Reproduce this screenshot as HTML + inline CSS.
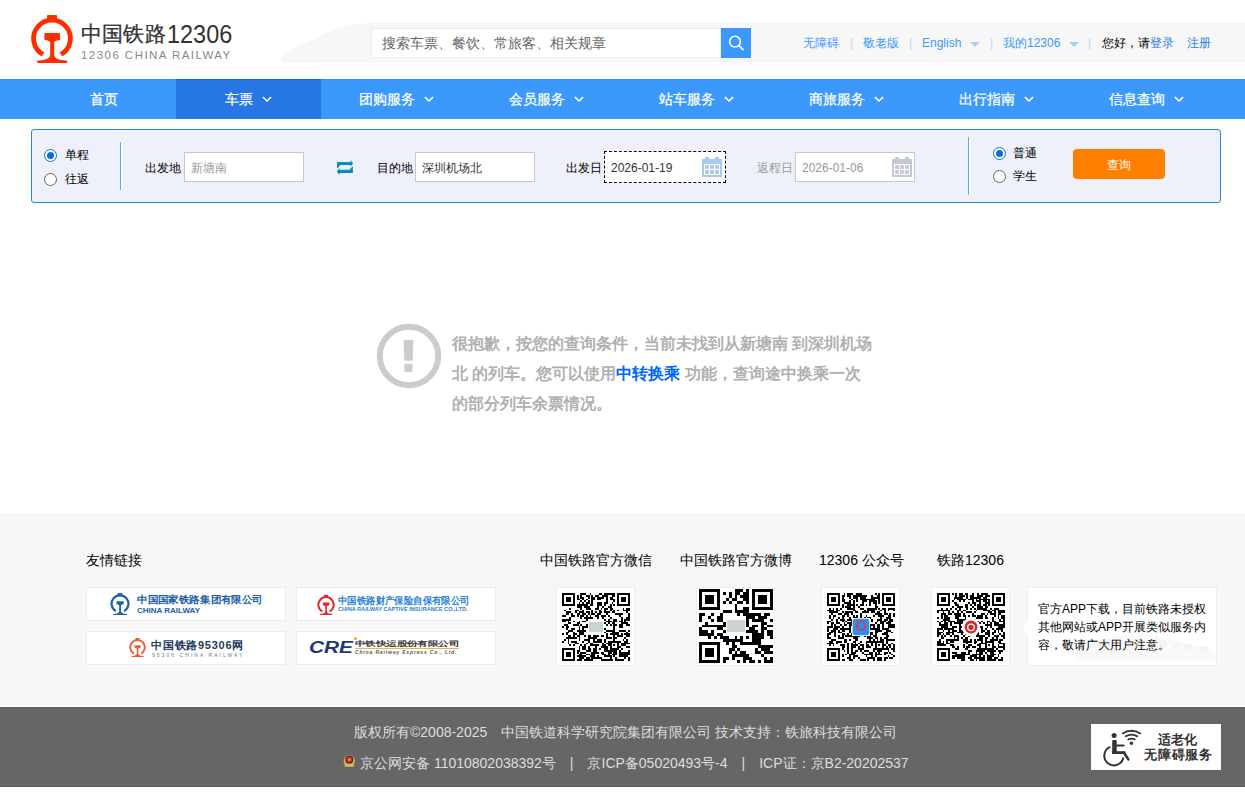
<!DOCTYPE html>
<html><head><meta charset="utf-8"><title>12306</title>
<style>
*{margin:0;padding:0;box-sizing:border-box}
html,body{width:1245px;height:812px;overflow:hidden;background:#fff}
body{position:relative;font-family:"Liberation Sans",sans-serif;color:#333;font-size:12px}
.a{position:absolute;white-space:nowrap}
.nav{position:absolute;left:0;top:79px;width:1245px;height:40px;background:#3b99fc;border-top:1px solid #3090fa}
.ni{position:absolute;top:0;height:39px;line-height:38px;color:#fff;font-size:14px;text-align:center;-webkit-text-stroke:0.25px #fff}
.ni .ar{display:inline-block;width:10px;height:6px;margin-left:9px;position:relative;top:-2.5px}
.panel{position:absolute;left:31px;top:129px;width:1190px;height:74px;border:1px solid #2b89d3;border-radius:3px;background:#eef1f9}
.radio{position:absolute;width:13px;height:13px;border-radius:50%;border:1px solid #666;background:#fff}
.radio.on{border:1.5px solid #0a70d8}
.radio.on:after{content:"";position:absolute;left:1.5px;top:1.5px;width:7px;height:7px;border-radius:50%;background:#0a70d8}
.inp{position:absolute;height:30px;background:#fff;border:1px solid #c8c8c8;font-size:12px;line-height:30px;padding-left:6px}
.lbl{position:absolute;font-size:12px;line-height:16px;color:#000;white-space:nowrap}
.qrbox{position:absolute;top:587px;width:79px;height:79px;background:#fff;border:1px solid #eee}
.lk{position:absolute;top:587px;width:200px;height:34px;background:#fff;border:1px solid #ececec}
.ft{position:absolute;font-size:14px;color:#000;line-height:16px;white-space:nowrap}
.top{position:absolute;top:35px;font-size:12px;line-height:16px;color:#3b99fc;white-space:nowrap}
.sep{color:#b9d5f7}
</style></head><body>
<svg width="0" height="0" style="position:absolute"><defs><symbol id="rl" viewBox="31 15 42 48"><rect x="47" y="15" width="10" height="5" rx="1"/><path d="M43 54.5A18.4 18.4 0 1 1 61 54.5" fill="none" stroke="currentColor" stroke-width="4.8"/><path d="M45.5 33h13c1 0 1.5 .6 1.5 1.5v5.2c-2 .4-4 1-5.8 2V55c0 2 2 3.5 5 4.5c3 .8 5.5 1 8 1.2V63H37.2v-2.3c2.5-.2 5-.4 8-1.2c3-1 5-2.5 5-4.5V41.7c-1.8-1-3.8-1.6-5.8-2v-5.2c0-.9.5-1.5 1.1-1.5z"/></symbol>
<symbol id="cal" viewBox="0 0 20 20"><rect x="0" y="2" width="20" height="18"/><rect x="3" y="0" width="4" height="2.5"/><rect x="13" y="0" width="4" height="2.5"/><rect x="2" y="7" width="16" height="11" fill="#fff"/><rect x="3.1" y="8.1" width="3.8" height="3.8"/><rect x="8.1" y="8.1" width="3.8" height="3.8"/><rect x="13.1" y="8.1" width="3.8" height="3.8"/><rect x="3.1" y="13.1" width="3.8" height="3.8"/><rect x="8.1" y="13.1" width="3.8" height="3.8"/><rect x="13.1" y="13.1" width="3.8" height="3.8"/></symbol></defs></svg>

<!-- header -->
<svg class="a" style="left:0;top:0" width="1245" height="79" viewBox="0 0 1245 79">
 <path d="M284 62.8H1245V22.8H380C360 23 345 25 330 31.5L298 46C288 50.5 281 55 281 59C281 61.5 282 62.8 284 62.8Z" fill="#f7f7f7"/>
 <svg x="31" y="15" width="42" height="48" style="color:#ff2c00;fill:#ff2c00"><use href="#rl"/></svg>
</svg>
<div class="a" style="left:80.5px;top:19.5px;font-size:21px;line-height:28px;color:#333;-webkit-text-stroke:0.3px #333;letter-spacing:0.4px">中国铁路</div>
<div class="a" style="left:166.5px;top:18.5px;font-size:25.5px;line-height:30px;color:#333;transform-origin:0 0;transform:scaleX(0.92)">12306</div>
<div class="a" style="left:81px;top:48px;font-size:11.5px;line-height:14px;color:#888;letter-spacing:1.45px">12306 CHINA RAILWAY</div>

<div class="a" style="left:371px;top:28px;width:350px;height:30px;background:#fff;border:1px solid #ececec"></div>
<div class="a" style="left:382px;top:34px;font-size:14px;line-height:18px;color:#666">搜索车票、餐饮、常旅客、相关规章</div>
<div class="a" style="left:721px;top:28px;width:30px;height:30px;background:#3b99fc"></div>
<svg class="a" style="left:721px;top:28px" width="30" height="30" viewBox="0 0 30 30"><circle cx="14" cy="13.7" r="5.4" fill="none" stroke="#fff" stroke-width="1.5"/><path d="M17.9 17.6L22 21.6" stroke="#fff" stroke-width="1.6" stroke-linecap="round"/></svg>

<div class="top" style="left:803px">无障碍</div>
<div class="top sep" style="left:850px">|</div>
<div class="top" style="left:863px">敬老版</div>
<div class="top sep" style="left:909px">|</div>
<div class="top" style="left:922px">English</div>
<svg class="a" style="left:970px;top:42px" width="10" height="5"><path d="M0 0h10L5 5z" fill="#a9cdf7"/></svg>
<div class="top sep" style="left:990px">|</div>
<div class="top" style="left:1003px">我的12306</div>
<svg class="a" style="left:1069px;top:42px" width="10" height="5"><path d="M0 0h10L5 5z" fill="#a9cdf7"/></svg>
<div class="top sep" style="left:1088px">|</div>
<div class="top" style="left:1102px;color:#000">您好，请<span style="color:#2b7fe8">登录</span></div>
<div class="top" style="left:1187px;color:#2b7fe8">注册</div>

<!-- nav -->
<div class="nav">
 <div class="ni" style="left:31px;width:145px">首页</div>
 <div class="a" style="left:176px;top:-1px;width:145px;height:40px;background:#2676e3;border-top:1px solid #1b66d6"></div><div class="ni" style="left:176px;width:145px">车票<svg class="ar" width="10" height="6" viewBox="0 0 10 6"><path d="M1 1.2L5 5L9 1.2" fill="none" stroke="#fff" stroke-width="1.6"/></svg></div>
 <div class="ni" style="left:321px;width:150px">团购服务<svg class="ar" width="10" height="6" viewBox="0 0 10 6"><path d="M1 1.2L5 5L9 1.2" fill="none" stroke="#fff" stroke-width="1.6"/></svg></div>
 <div class="ni" style="left:471px;width:150px">会员服务<svg class="ar" width="10" height="6" viewBox="0 0 10 6"><path d="M1 1.2L5 5L9 1.2" fill="none" stroke="#fff" stroke-width="1.6"/></svg></div>
 <div class="ni" style="left:621px;width:150px">站车服务<svg class="ar" width="10" height="6" viewBox="0 0 10 6"><path d="M1 1.2L5 5L9 1.2" fill="none" stroke="#fff" stroke-width="1.6"/></svg></div>
 <div class="ni" style="left:771px;width:150px">商旅服务<svg class="ar" width="10" height="6" viewBox="0 0 10 6"><path d="M1 1.2L5 5L9 1.2" fill="none" stroke="#fff" stroke-width="1.6"/></svg></div>
 <div class="ni" style="left:921px;width:150px">出行指南<svg class="ar" width="10" height="6" viewBox="0 0 10 6"><path d="M1 1.2L5 5L9 1.2" fill="none" stroke="#fff" stroke-width="1.6"/></svg></div>
 <div class="ni" style="left:1071px;width:150px">信息查询<svg class="ar" width="10" height="6" viewBox="0 0 10 6"><path d="M1 1.2L5 5L9 1.2" fill="none" stroke="#fff" stroke-width="1.6"/></svg></div>
</div>

<!-- search panel -->
<div class="panel"></div>
<div class="radio on" style="left:44px;top:149px"></div>
<div class="lbl" style="left:65px;top:147px">单程</div>
<div class="radio" style="left:44px;top:173px"></div>
<div class="lbl" style="left:65px;top:171px">往返</div>
<div class="a" style="left:120px;top:142px;width:1px;height:48px;background:#5aaee0;box-shadow:1px 0 0 #fff"></div>
<div class="lbl" style="left:145px;top:160px">出发地</div>
<div class="inp" style="left:184px;top:152px;width:120px;color:#999">新塘南</div>
<svg class="a" style="left:330px;top:154px" width="30" height="26" viewBox="0 0 30 26"><defs><linearGradient id="sg" x1="0" y1="0" x2="0" y2="1"><stop offset="0" stop-color="#0aa2da"/><stop offset="1" stop-color="#0877aa"/></linearGradient></defs><g fill="url(#sg)"><path d="M7 8H20.5V5.9L23.1 9.45L20.5 12.6V10.9H9.8V11.6L7 14.7Z"/><path d="M22.9 18.9H9.6V21.1L6.9 17.45L9.6 14.1V15.7H20V15L22.9 12Z"/></g></svg>
<div class="lbl" style="left:377px;top:160px">目的地</div>
<div class="inp" style="left:415px;top:152px;width:120px;color:#333">深圳机场北</div>
<div class="lbl" style="left:566px;top:160px">出发日</div>
<div class="inp" style="left:604px;top:151px;width:122px;height:32px;border:1px dashed #000;color:#333;line-height:32px">2026-01-19</div>
<svg class="a" style="left:702px;top:157px;fill:#a8cdec" width="20" height="20"><use href="#cal"/></svg>
<div class="lbl" style="left:757px;top:160px;color:#999">返程日</div>
<div class="inp" style="left:795px;top:152px;width:120px;color:#999;line-height:31px">2026-01-06</div>
<svg class="a" style="left:892px;top:157px;fill:#c4c8d4" width="20" height="20"><use href="#cal"/></svg>
<div class="a" style="left:968px;top:137px;width:1px;height:58px;background:#5aaee0;box-shadow:1px 0 0 #fff"></div>
<div class="radio on" style="left:993px;top:147px"></div>
<div class="lbl" style="left:1013px;top:145px">普通</div>
<div class="radio" style="left:993px;top:170px"></div>
<div class="lbl" style="left:1013px;top:168px">学生</div>
<div class="a" style="left:1073px;top:149px;width:92px;height:30px;background:#ff8000;border-radius:4px;color:#fff;font-size:12px;line-height:33px;text-align:center">查询</div>

<!-- message -->
<svg class="a" style="left:370px;top:317px" width="80" height="80" viewBox="0 0 80 80"><circle cx="39" cy="39" r="29.2" fill="none" stroke="#ccc" stroke-width="6"/><path d="M33.5 23h10l-.8 20.8h-8.4z" fill="#ccc"/><rect x="34.3" y="47" width="8.2" height="8" fill="#ccc"/></svg>
<div class="a" style="left:452px;top:329px;font-size:16px;line-height:30px;color:#b0b0b0;font-weight:bold">很抱歉，按您的查询条件，当前未找到从新塘南 到深圳机场<br>北 的列车。您可以使用<span style="color:#0066ff">中转换乘</span> 功能，查询途中换乘一次<br>的部分列车余票情况。</div>

<!-- footer -->
<div class="a" style="left:0;top:513px;width:1245px;height:193px;background:#f7f7f7"></div>
<div class="ft" style="left:86px;top:552px">友情链接</div>
<div class="lk" style="left:86px"></div>
<div class="lk" style="left:296px"></div>
<div class="lk" style="left:86px;top:631px"></div>
<div class="lk" style="left:296px;top:631px"></div>
<svg class="a" style="left:110px;top:593px;color:#1f5fa6;fill:#1f5fa6" width="20" height="22"><use href="#rl"/></svg>
<div class="a" style="left:137px;top:594px;font-size:10px;line-height:12px;color:#2160a8;font-weight:bold;transform-origin:0 0;transform:scaleX(1.05)">中国国家铁路集团有限公司</div>
<div class="a" style="left:137px;top:606px;font-size:8px;line-height:10px;color:#2160a8;font-weight:bold">CHINA RAILWAY</div>
<svg class="a" style="left:317px;top:595px;color:#e3242b;fill:#e3242b" width="18" height="20"><use href="#rl"/></svg>
<div class="a" style="left:338px;top:595px;font-size:9.6px;line-height:11px;color:#2b7fd9;font-weight:bold;transform-origin:0 0;transform:scaleX(0.94)">中国铁路财产保险自保有限公司</div>
<div class="a" style="left:338px;top:606px;font-size:5.6px;line-height:6px;color:#2b7fd9;font-weight:bold;transform-origin:0 0;transform:scaleX(1.0)">CHINA RAILWAY CAPTIVE INSURANCE CO.,LTD.</div>
<svg class="a" style="left:129px;top:638px;color:#f05a3a;fill:#f05a3a" width="17" height="19"><use href="#rl"/></svg>
<div class="a" style="left:151px;top:639px;font-size:11px;line-height:12px;color:#23395d;font-weight:bold;letter-spacing:0.75px">中国铁路95306网</div>
<div class="a" style="left:152px;top:652px;font-size:5px;line-height:6px;color:#6a7a90;letter-spacing:2.05px">95306 CHINA RAILWAY</div>
<div class="a" style="left:309px;top:639.5px;font-size:16px;line-height:16px;color:#1d3a7a;font-weight:bold;font-style:italic;transform-origin:0 0;transform:scaleX(1.3)">CRE</div>
<div class="a" style="left:355px;top:640px;font-size:10.3px;line-height:12px;color:#333;font-weight:bold;transform-origin:0 0;transform:scale(1.04,0.68)">中铁快运股份有限公司</div>
<div class="a" style="left:355px;top:648px;width:104px;height:1px;background:#f0b040"></div><div class="a" style="left:354px;top:637px;width:3px;height:3px;border-radius:50%;background:#f5a020"></div>
<div class="a" style="left:355px;top:649px;font-size:5px;line-height:6px;color:#555;font-weight:bold;font-style:italic;letter-spacing:0.85px">China Railway Express Co., Ltd.</div>

<div class="ft" style="left:540px;top:552px">中国铁路官方微信</div>
<div class="ft" style="left:680px;top:552px">中国铁路官方微博</div>
<div class="ft" style="left:819px;top:552px">12306 公众号</div>
<div class="ft" style="left:937px;top:552px">铁路12306</div>
<div class="qrbox" style="left:556px"></div>
<div class="qrbox" style="left:696px"></div>
<div class="qrbox" style="left:821px"></div>
<div class="qrbox" style="left:931px"></div>
<svg class="a" style="left:562px;top:593px" width="68" height="68" viewBox="0 0 37 37" shape-rendering="crispEdges"><path d="M0 0h7v1h-7zM10 0h3v1h-3zM15 0h1v1h-1zM20 0h2v1h-2zM23 0h6v1h-6zM30 0h7v1h-7zM0 1h1v1h-1zM6 1h1v1h-1zM8 1h1v1h-1zM10 1h1v1h-1zM13 1h2v1h-2zM16 1h1v1h-1zM18 1h2v1h-2zM22 1h3v1h-3zM27 1h2v1h-2zM30 1h1v1h-1zM36 1h1v1h-1zM0 2h1v1h-1zM2 2h3v1h-3zM6 2h1v1h-1zM8 2h1v1h-1zM10 2h2v1h-2zM14 2h1v1h-1zM16 2h2v1h-2zM19 2h4v1h-4zM24 2h1v1h-1zM26 2h2v1h-2zM30 2h1v1h-1zM32 2h3v1h-3zM36 2h1v1h-1zM0 3h1v1h-1zM2 3h3v1h-3zM6 3h1v1h-1zM8 3h2v1h-2zM11 3h1v1h-1zM13 3h1v1h-1zM16 3h2v1h-2zM19 3h2v1h-2zM24 3h1v1h-1zM26 3h3v1h-3zM30 3h1v1h-1zM32 3h3v1h-3zM36 3h1v1h-1zM0 4h1v1h-1zM2 4h3v1h-3zM6 4h1v1h-1zM10 4h1v1h-1zM12 4h1v1h-1zM14 4h1v1h-1zM16 4h1v1h-1zM24 4h1v1h-1zM28 4h1v1h-1zM30 4h1v1h-1zM32 4h3v1h-3zM36 4h1v1h-1zM0 5h1v1h-1zM6 5h1v1h-1zM9 5h1v1h-1zM11 5h1v1h-1zM13 5h2v1h-2zM16 5h1v1h-1zM19 5h3v1h-3zM23 5h2v1h-2zM27 5h1v1h-1zM30 5h1v1h-1zM36 5h1v1h-1zM0 6h7v1h-7zM8 6h6v1h-6zM15 6h2v1h-2zM19 6h3v1h-3zM23 6h1v1h-1zM26 6h1v1h-1zM28 6h1v1h-1zM30 6h7v1h-7zM8 7h3v1h-3zM12 7h3v1h-3zM19 7h1v1h-1zM22 7h1v1h-1zM25 7h2v1h-2zM4 8h1v1h-1zM10 8h1v1h-1zM13 8h3v1h-3zM18 8h2v1h-2zM21 8h1v1h-1zM23 8h2v1h-2zM26 8h2v1h-2zM33 8h1v1h-1zM35 8h2v1h-2zM1 9h1v1h-1zM7 9h2v1h-2zM11 9h1v1h-1zM16 9h1v1h-1zM20 9h1v1h-1zM23 9h1v1h-1zM26 9h1v1h-1zM28 9h1v1h-1zM30 9h1v1h-1zM33 9h4v1h-4zM2 10h3v1h-3zM7 10h1v1h-1zM9 10h3v1h-3zM13 10h2v1h-2zM16 10h1v1h-1zM18 10h1v1h-1zM20 10h2v1h-2zM23 10h3v1h-3zM27 10h2v1h-2zM35 10h1v1h-1zM2 11h2v1h-2zM5 11h1v1h-1zM8 11h2v1h-2zM11 11h2v1h-2zM14 11h1v1h-1zM16 11h2v1h-2zM19 11h2v1h-2zM24 11h1v1h-1zM29 11h4v1h-4zM36 11h1v1h-1zM0 12h2v1h-2zM5 12h2v1h-2zM8 12h1v1h-1zM10 12h2v1h-2zM13 12h1v1h-1zM15 12h1v1h-1zM18 12h2v1h-2zM21 12h3v1h-3zM25 12h1v1h-1zM31 12h1v1h-1zM36 12h1v1h-1zM4 13h1v1h-1zM10 13h1v1h-1zM12 13h5v1h-5zM19 13h1v1h-1zM22 13h1v1h-1zM26 13h1v1h-1zM32 13h1v1h-1zM35 13h2v1h-2zM0 14h5v1h-5zM13 14h1v1h-1zM16 14h1v1h-1zM18 14h4v1h-4zM23 14h1v1h-1zM25 14h1v1h-1zM28 14h2v1h-2zM32 14h1v1h-1zM34 14h3v1h-3zM0 15h2v1h-2zM3 15h1v1h-1zM6 15h1v1h-1zM9 15h1v1h-1zM11 15h2v1h-2zM14 15h1v1h-1zM18 15h1v1h-1zM22 15h1v1h-1zM24 15h3v1h-3zM28 15h2v1h-2zM31 15h2v1h-2zM34 15h1v1h-1zM3 16h2v1h-2zM8 16h2v1h-2zM15 16h2v1h-2zM20 16h4v1h-4zM25 16h1v1h-1zM27 16h2v1h-2zM32 16h4v1h-4zM1 17h2v1h-2zM6 17h3v1h-3zM10 17h1v1h-1zM13 17h1v1h-1zM17 17h3v1h-3zM21 17h2v1h-2zM24 17h1v1h-1zM26 17h1v1h-1zM28 17h2v1h-2zM31 17h2v1h-2zM35 17h2v1h-2zM0 18h1v1h-1zM2 18h2v1h-2zM9 18h1v1h-1zM11 18h3v1h-3zM16 18h7v1h-7zM28 18h1v1h-1zM31 18h2v1h-2zM2 19h1v1h-1zM5 19h2v1h-2zM9 19h1v1h-1zM11 19h1v1h-1zM14 19h2v1h-2zM19 19h2v1h-2zM23 19h1v1h-1zM28 19h1v1h-1zM3 20h3v1h-3zM8 20h5v1h-5zM14 20h3v1h-3zM19 20h3v1h-3zM24 20h5v1h-5zM31 20h4v1h-4zM36 20h1v1h-1zM2 21h2v1h-2zM6 21h1v1h-1zM9 21h3v1h-3zM14 21h1v1h-1zM17 21h1v1h-1zM20 21h4v1h-4zM27 21h4v1h-4zM35 21h1v1h-1zM0 22h1v1h-1zM2 22h1v1h-1zM6 22h2v1h-2zM9 22h3v1h-3zM15 22h1v1h-1zM17 22h1v1h-1zM19 22h1v1h-1zM21 22h1v1h-1zM24 22h1v1h-1zM26 22h5v1h-5zM32 22h1v1h-1zM34 22h3v1h-3zM3 23h2v1h-2zM6 23h1v1h-1zM8 23h2v1h-2zM12 23h1v1h-1zM14 23h2v1h-2zM17 23h3v1h-3zM21 23h2v1h-2zM24 23h1v1h-1zM28 23h1v1h-1zM30 23h3v1h-3zM35 23h2v1h-2zM2 24h6v1h-6zM9 24h1v1h-1zM14 24h5v1h-5zM24 24h3v1h-3zM28 24h2v1h-2zM34 24h1v1h-1zM1 25h1v1h-1zM3 25h1v1h-1zM9 25h1v1h-1zM12 25h3v1h-3zM17 25h1v1h-1zM19 25h3v1h-3zM23 25h1v1h-1zM28 25h1v1h-1zM33 25h1v1h-1zM35 25h1v1h-1zM0 26h1v1h-1zM3 26h1v1h-1zM5 26h3v1h-3zM11 26h1v1h-1zM14 26h1v1h-1zM17 26h5v1h-5zM23 26h1v1h-1zM25 26h7v1h-7zM34 26h2v1h-2zM3 27h1v1h-1zM7 27h2v1h-2zM13 27h1v1h-1zM15 27h2v1h-2zM22 27h1v1h-1zM24 27h3v1h-3zM30 27h1v1h-1zM32 27h5v1h-5zM4 28h1v1h-1zM6 28h1v1h-1zM10 28h1v1h-1zM12 28h1v1h-1zM15 28h5v1h-5zM22 28h2v1h-2zM25 28h2v1h-2zM28 28h1v1h-1zM30 28h1v1h-1zM32 28h3v1h-3zM9 29h1v1h-1zM11 29h2v1h-2zM14 29h1v1h-1zM18 29h1v1h-1zM21 29h4v1h-4zM26 29h1v1h-1zM30 29h2v1h-2zM35 29h2v1h-2zM0 30h7v1h-7zM9 30h1v1h-1zM11 30h2v1h-2zM14 30h2v1h-2zM17 30h2v1h-2zM20 30h1v1h-1zM23 30h2v1h-2zM26 30h5v1h-5zM32 30h1v1h-1zM0 31h1v1h-1zM6 31h1v1h-1zM8 31h2v1h-2zM13 31h3v1h-3zM17 31h2v1h-2zM23 31h7v1h-7zM31 31h1v1h-1zM36 31h1v1h-1zM0 32h1v1h-1zM2 32h3v1h-3zM6 32h1v1h-1zM8 32h1v1h-1zM10 32h3v1h-3zM16 32h4v1h-4zM21 32h2v1h-2zM25 32h2v1h-2zM28 32h2v1h-2zM31 32h6v1h-6zM0 33h1v1h-1zM2 33h3v1h-3zM6 33h1v1h-1zM9 33h2v1h-2zM13 33h2v1h-2zM16 33h2v1h-2zM22 33h2v1h-2zM25 33h1v1h-1zM27 33h3v1h-3zM31 33h6v1h-6zM0 34h1v1h-1zM2 34h3v1h-3zM6 34h1v1h-1zM8 34h5v1h-5zM15 34h3v1h-3zM19 34h1v1h-1zM23 34h4v1h-4zM28 34h1v1h-1zM31 34h5v1h-5zM0 35h1v1h-1zM6 35h1v1h-1zM9 35h3v1h-3zM13 35h2v1h-2zM16 35h6v1h-6zM26 35h1v1h-1zM29 35h1v1h-1zM34 35h1v1h-1zM36 35h1v1h-1zM0 36h7v1h-7zM8 36h3v1h-3zM12 36h5v1h-5zM21 36h7v1h-7zM29 36h5v1h-5zM36 36h1v1h-1z"/><rect x="14" y="14" width="9" height="9" fill="#fff"/><rect x="14.5" y="16" width="8" height="5" fill="#c9d3d6"/></svg>
<svg class="a" style="left:699px;top:589px" width="74" height="74" viewBox="0 0 25 25" shape-rendering="crispEdges"><path d="M0 0h7v1h-7zM12 0h3v1h-3zM16 0h1v1h-1zM18 0h7v1h-7zM0 1h1v1h-1zM6 1h1v1h-1zM8 1h1v1h-1zM10 1h1v1h-1zM12 1h2v1h-2zM15 1h2v1h-2zM18 1h1v1h-1zM24 1h1v1h-1zM0 2h1v1h-1zM2 2h3v1h-3zM6 2h1v1h-1zM10 2h1v1h-1zM12 2h1v1h-1zM14 2h3v1h-3zM18 2h1v1h-1zM20 2h3v1h-3zM24 2h1v1h-1zM0 3h1v1h-1zM2 3h3v1h-3zM6 3h1v1h-1zM9 3h1v1h-1zM11 3h2v1h-2zM15 3h2v1h-2zM18 3h1v1h-1zM20 3h3v1h-3zM24 3h1v1h-1zM0 4h1v1h-1zM2 4h3v1h-3zM6 4h1v1h-1zM8 4h1v1h-1zM10 4h1v1h-1zM13 4h2v1h-2zM16 4h1v1h-1zM18 4h1v1h-1zM20 4h3v1h-3zM24 4h1v1h-1zM0 5h1v1h-1zM6 5h1v1h-1zM12 5h1v1h-1zM18 5h1v1h-1zM24 5h1v1h-1zM0 6h7v1h-7zM12 6h1v1h-1zM15 6h2v1h-2zM18 6h7v1h-7zM8 7h3v1h-3zM12 7h5v1h-5zM0 8h2v1h-2zM4 8h1v1h-1zM7 8h1v1h-1zM13 8h1v1h-1zM15 8h6v1h-6zM22 8h2v1h-2zM0 9h1v1h-1zM3 9h1v1h-1zM6 9h2v1h-2zM12 9h1v1h-1zM14 9h5v1h-5zM20 9h3v1h-3zM0 10h1v1h-1zM4 10h1v1h-1zM6 10h2v1h-2zM10 10h1v1h-1zM12 10h5v1h-5zM18 10h4v1h-4zM24 10h1v1h-1zM2 11h1v1h-1zM8 11h1v1h-1zM10 11h2v1h-2zM14 11h1v1h-1zM16 11h1v1h-1zM21 11h2v1h-2zM1 12h8v1h-8zM15 12h2v1h-2zM18 12h2v1h-2zM21 12h1v1h-1zM23 12h2v1h-2zM0 13h1v1h-1zM6 13h2v1h-2zM11 13h3v1h-3zM17 13h2v1h-2zM21 13h2v1h-2zM0 14h3v1h-3zM4 14h1v1h-1zM8 14h3v1h-3zM13 14h7v1h-7zM21 14h1v1h-1zM23 14h2v1h-2zM0 15h5v1h-5zM6 15h2v1h-2zM9 15h1v1h-1zM12 15h1v1h-1zM14 15h1v1h-1zM18 15h4v1h-4zM23 15h2v1h-2zM3 16h1v1h-1zM5 16h1v1h-1zM7 16h3v1h-3zM12 16h1v1h-1zM14 16h1v1h-1zM16 16h1v1h-1zM18 16h4v1h-4zM24 16h1v1h-1zM8 17h7v1h-7zM18 17h3v1h-3zM0 18h7v1h-7zM9 18h1v1h-1zM11 18h1v1h-1zM14 18h7v1h-7zM0 19h1v1h-1zM6 19h1v1h-1zM11 19h2v1h-2zM20 19h5v1h-5zM0 20h1v1h-1zM2 20h3v1h-3zM6 20h1v1h-1zM10 20h2v1h-2zM13 20h1v1h-1zM19 20h1v1h-1zM21 20h3v1h-3zM0 21h1v1h-1zM2 21h3v1h-3zM6 21h1v1h-1zM10 21h1v1h-1zM12 21h1v1h-1zM14 21h2v1h-2zM19 21h2v1h-2zM22 21h3v1h-3zM0 22h1v1h-1zM2 22h3v1h-3zM6 22h1v1h-1zM11 22h6v1h-6zM21 22h1v1h-1zM0 23h1v1h-1zM6 23h1v1h-1zM8 23h2v1h-2zM11 23h1v1h-1zM15 23h3v1h-3zM22 23h1v1h-1zM24 23h1v1h-1zM0 24h7v1h-7zM8 24h1v1h-1zM13 24h1v1h-1zM15 24h1v1h-1zM17 24h2v1h-2zM20 24h1v1h-1zM22 24h3v1h-3z"/><rect x="9" y="9" width="7" height="7" fill="#fff"/><rect x="9.5" y="10.5" width="6" height="4" fill="#c9d3d6"/></svg>
<svg class="a" style="left:827px;top:593px" width="68" height="68" viewBox="0 0 37 37" shape-rendering="crispEdges"><path d="M0 0h7v1h-7zM9 0h1v1h-1zM11 0h3v1h-3zM16 0h3v1h-3zM26 0h1v1h-1zM28 0h1v1h-1zM30 0h7v1h-7zM0 1h1v1h-1zM6 1h1v1h-1zM8 1h2v1h-2zM11 1h2v1h-2zM14 1h8v1h-8zM24 1h1v1h-1zM27 1h2v1h-2zM30 1h1v1h-1zM36 1h1v1h-1zM0 2h1v1h-1zM2 2h3v1h-3zM6 2h1v1h-1zM8 2h1v1h-1zM12 2h1v1h-1zM14 2h3v1h-3zM18 2h3v1h-3zM24 2h5v1h-5zM30 2h1v1h-1zM32 2h3v1h-3zM36 2h1v1h-1zM0 3h1v1h-1zM2 3h3v1h-3zM6 3h1v1h-1zM8 3h2v1h-2zM13 3h1v1h-1zM16 3h1v1h-1zM18 3h8v1h-8zM28 3h1v1h-1zM30 3h1v1h-1zM32 3h3v1h-3zM36 3h1v1h-1zM0 4h1v1h-1zM2 4h3v1h-3zM6 4h1v1h-1zM8 4h2v1h-2zM12 4h1v1h-1zM14 4h1v1h-1zM16 4h1v1h-1zM19 4h3v1h-3zM23 4h4v1h-4zM28 4h1v1h-1zM30 4h1v1h-1zM32 4h3v1h-3zM36 4h1v1h-1zM0 5h1v1h-1zM6 5h1v1h-1zM9 5h4v1h-4zM14 5h1v1h-1zM19 5h1v1h-1zM23 5h1v1h-1zM25 5h2v1h-2zM28 5h1v1h-1zM30 5h1v1h-1zM36 5h1v1h-1zM0 6h7v1h-7zM8 6h1v1h-1zM11 6h4v1h-4zM16 6h1v1h-1zM18 6h2v1h-2zM21 6h1v1h-1zM23 6h1v1h-1zM26 6h1v1h-1zM30 6h7v1h-7zM8 7h1v1h-1zM10 7h3v1h-3zM14 7h1v1h-1zM17 7h1v1h-1zM26 7h2v1h-2zM1 8h1v1h-1zM3 8h1v1h-1zM5 8h1v1h-1zM7 8h1v1h-1zM11 8h4v1h-4zM18 8h2v1h-2zM22 8h5v1h-5zM28 8h1v1h-1zM30 8h2v1h-2zM33 8h4v1h-4zM0 9h4v1h-4zM5 9h2v1h-2zM14 9h2v1h-2zM20 9h1v1h-1zM22 9h4v1h-4zM29 9h1v1h-1zM31 9h1v1h-1zM33 9h1v1h-1zM36 9h1v1h-1zM1 10h5v1h-5zM8 10h1v1h-1zM10 10h4v1h-4zM15 10h2v1h-2zM19 10h4v1h-4zM24 10h2v1h-2zM27 10h2v1h-2zM31 10h1v1h-1zM2 11h1v1h-1zM6 11h2v1h-2zM9 11h3v1h-3zM13 11h1v1h-1zM18 11h1v1h-1zM26 11h4v1h-4zM31 11h2v1h-2zM34 11h1v1h-1zM36 11h1v1h-1zM1 12h1v1h-1zM3 12h2v1h-2zM8 12h2v1h-2zM11 12h1v1h-1zM14 12h1v1h-1zM16 12h1v1h-1zM18 12h1v1h-1zM21 12h1v1h-1zM25 12h1v1h-1zM28 12h3v1h-3zM33 12h2v1h-2zM36 12h1v1h-1zM1 13h1v1h-1zM3 13h1v1h-1zM6 13h1v1h-1zM8 13h1v1h-1zM12 13h1v1h-1zM14 13h3v1h-3zM18 13h1v1h-1zM20 13h1v1h-1zM22 13h2v1h-2zM29 13h1v1h-1zM32 13h3v1h-3zM2 14h1v1h-1zM5 14h1v1h-1zM7 14h3v1h-3zM11 14h3v1h-3zM16 14h1v1h-1zM18 14h3v1h-3zM24 14h1v1h-1zM27 14h3v1h-3zM31 14h2v1h-2zM34 14h2v1h-2zM0 15h2v1h-2zM5 15h1v1h-1zM8 15h1v1h-1zM10 15h1v1h-1zM13 15h1v1h-1zM15 15h1v1h-1zM22 15h1v1h-1zM24 15h1v1h-1zM27 15h1v1h-1zM29 15h3v1h-3zM33 15h3v1h-3zM0 16h1v1h-1zM2 16h2v1h-2zM5 16h2v1h-2zM9 16h1v1h-1zM11 16h3v1h-3zM17 16h1v1h-1zM19 16h1v1h-1zM21 16h2v1h-2zM26 16h1v1h-1zM29 16h2v1h-2zM32 16h3v1h-3zM2 17h1v1h-1zM4 17h1v1h-1zM7 17h1v1h-1zM9 17h2v1h-2zM12 17h2v1h-2zM15 17h2v1h-2zM19 17h1v1h-1zM21 17h5v1h-5zM27 17h2v1h-2zM30 17h1v1h-1zM33 17h4v1h-4zM0 18h3v1h-3zM4 18h3v1h-3zM8 18h1v1h-1zM12 18h1v1h-1zM14 18h1v1h-1zM17 18h2v1h-2zM23 18h1v1h-1zM25 18h1v1h-1zM27 18h2v1h-2zM30 18h1v1h-1zM33 18h4v1h-4zM0 19h1v1h-1zM3 19h3v1h-3zM7 19h6v1h-6zM15 19h2v1h-2zM18 19h2v1h-2zM21 19h8v1h-8zM30 19h4v1h-4zM0 20h1v1h-1zM2 20h3v1h-3zM6 20h1v1h-1zM8 20h2v1h-2zM12 20h1v1h-1zM14 20h1v1h-1zM16 20h1v1h-1zM19 20h2v1h-2zM26 20h4v1h-4zM32 20h3v1h-3zM1 21h2v1h-2zM4 21h1v1h-1zM6 21h2v1h-2zM12 21h1v1h-1zM15 21h2v1h-2zM18 21h2v1h-2zM21 21h1v1h-1zM23 21h2v1h-2zM26 21h2v1h-2zM31 21h2v1h-2zM35 21h1v1h-1zM0 22h2v1h-2zM4 22h1v1h-1zM8 22h2v1h-2zM11 22h1v1h-1zM13 22h1v1h-1zM15 22h1v1h-1zM18 22h2v1h-2zM21 22h4v1h-4zM26 22h1v1h-1zM30 22h3v1h-3zM0 23h1v1h-1zM4 23h1v1h-1zM6 23h1v1h-1zM8 23h1v1h-1zM10 23h8v1h-8zM20 23h1v1h-1zM22 23h2v1h-2zM25 23h2v1h-2zM32 23h2v1h-2zM0 24h2v1h-2zM6 24h3v1h-3zM14 24h3v1h-3zM22 24h3v1h-3zM26 24h2v1h-2zM29 24h1v1h-1zM31 24h2v1h-2zM2 25h3v1h-3zM9 25h2v1h-2zM12 25h1v1h-1zM15 25h2v1h-2zM23 25h1v1h-1zM25 25h1v1h-1zM27 25h1v1h-1zM29 25h2v1h-2zM32 25h5v1h-5zM1 26h2v1h-2zM5 26h3v1h-3zM9 26h2v1h-2zM14 26h2v1h-2zM18 26h1v1h-1zM21 26h10v1h-10zM32 26h1v1h-1zM0 27h4v1h-4zM5 27h1v1h-1zM11 27h1v1h-1zM13 27h1v1h-1zM15 27h1v1h-1zM17 27h1v1h-1zM21 27h1v1h-1zM24 27h1v1h-1zM26 27h1v1h-1zM30 27h1v1h-1zM32 27h1v1h-1zM35 27h1v1h-1zM1 28h1v1h-1zM3 28h1v1h-1zM7 28h3v1h-3zM11 28h1v1h-1zM13 28h4v1h-4zM18 28h2v1h-2zM21 28h2v1h-2zM24 28h1v1h-1zM26 28h1v1h-1zM28 28h1v1h-1zM30 28h2v1h-2zM33 28h2v1h-2zM36 28h1v1h-1zM8 29h2v1h-2zM11 29h1v1h-1zM13 29h3v1h-3zM17 29h1v1h-1zM19 29h1v1h-1zM21 29h3v1h-3zM26 29h1v1h-1zM30 29h1v1h-1zM32 29h1v1h-1zM34 29h1v1h-1zM36 29h1v1h-1zM0 30h7v1h-7zM8 30h1v1h-1zM11 30h1v1h-1zM13 30h1v1h-1zM17 30h3v1h-3zM25 30h9v1h-9zM35 30h2v1h-2zM0 31h1v1h-1zM6 31h1v1h-1zM9 31h1v1h-1zM11 31h1v1h-1zM13 31h1v1h-1zM15 31h2v1h-2zM18 31h1v1h-1zM20 31h3v1h-3zM25 31h1v1h-1zM27 31h3v1h-3zM33 31h1v1h-1zM36 31h1v1h-1zM0 32h1v1h-1zM2 32h3v1h-3zM6 32h1v1h-1zM11 32h1v1h-1zM13 32h3v1h-3zM19 32h1v1h-1zM23 32h2v1h-2zM26 32h1v1h-1zM28 32h1v1h-1zM31 32h2v1h-2zM34 32h1v1h-1zM0 33h1v1h-1zM2 33h3v1h-3zM6 33h1v1h-1zM8 33h1v1h-1zM10 33h1v1h-1zM12 33h3v1h-3zM20 33h5v1h-5zM26 33h4v1h-4zM31 33h1v1h-1zM35 33h1v1h-1zM0 34h1v1h-1zM2 34h3v1h-3zM6 34h1v1h-1zM8 34h1v1h-1zM12 34h1v1h-1zM14 34h3v1h-3zM21 34h1v1h-1zM24 34h1v1h-1zM26 34h1v1h-1zM33 34h1v1h-1zM36 34h1v1h-1zM0 35h1v1h-1zM6 35h1v1h-1zM11 35h2v1h-2zM14 35h1v1h-1zM17 35h1v1h-1zM22 35h4v1h-4zM27 35h3v1h-3zM31 35h2v1h-2zM34 35h2v1h-2zM0 36h7v1h-7zM8 36h2v1h-2zM12 36h2v1h-2zM18 36h3v1h-3zM22 36h1v1h-1zM25 36h1v1h-1zM27 36h3v1h-3zM31 36h1v1h-1z"/><rect x="13.5" y="13.5" width="10" height="10" fill="#fff"/><rect x="14" y="14" width="9" height="9" rx="1.5" fill="#2b8ef0" shape-rendering="auto"/><circle cx="18.5" cy="17.8" r="2.3" fill="none" stroke="#e33" stroke-width=".9" shape-rendering="auto"/></svg>
<svg class="a" style="left:937px;top:593px" width="68" height="68" viewBox="0 0 37 37" shape-rendering="crispEdges"><path d="M0 0h7v1h-7zM8 0h1v1h-1zM10 0h1v1h-1zM12 0h2v1h-2zM15 0h2v1h-2zM19 0h1v1h-1zM22 0h1v1h-1zM24 0h4v1h-4zM30 0h7v1h-7zM0 1h1v1h-1zM6 1h1v1h-1zM10 1h1v1h-1zM12 1h3v1h-3zM16 1h1v1h-1zM18 1h2v1h-2zM22 1h3v1h-3zM26 1h3v1h-3zM30 1h1v1h-1zM36 1h1v1h-1zM0 2h1v1h-1zM2 2h3v1h-3zM6 2h1v1h-1zM9 2h5v1h-5zM16 2h1v1h-1zM18 2h6v1h-6zM25 2h2v1h-2zM30 2h1v1h-1zM32 2h3v1h-3zM36 2h1v1h-1zM0 3h1v1h-1zM2 3h3v1h-3zM6 3h1v1h-1zM9 3h1v1h-1zM11 3h5v1h-5zM17 3h3v1h-3zM21 3h1v1h-1zM23 3h6v1h-6zM30 3h1v1h-1zM32 3h3v1h-3zM36 3h1v1h-1zM0 4h1v1h-1zM2 4h3v1h-3zM6 4h1v1h-1zM8 4h1v1h-1zM12 4h1v1h-1zM14 4h1v1h-1zM19 4h1v1h-1zM21 4h3v1h-3zM25 4h2v1h-2zM28 4h1v1h-1zM30 4h1v1h-1zM32 4h3v1h-3zM36 4h1v1h-1zM0 5h1v1h-1zM6 5h1v1h-1zM9 5h2v1h-2zM17 5h1v1h-1zM19 5h2v1h-2zM23 5h1v1h-1zM26 5h3v1h-3zM30 5h1v1h-1zM36 5h1v1h-1zM0 6h7v1h-7zM10 6h2v1h-2zM15 6h2v1h-2zM18 6h1v1h-1zM20 6h1v1h-1zM22 6h2v1h-2zM25 6h2v1h-2zM28 6h1v1h-1zM30 6h7v1h-7zM8 7h1v1h-1zM11 7h3v1h-3zM15 7h2v1h-2zM19 7h1v1h-1zM22 7h3v1h-3zM26 7h2v1h-2zM2 8h1v1h-1zM5 8h1v1h-1zM7 8h1v1h-1zM10 8h1v1h-1zM12 8h1v1h-1zM16 8h1v1h-1zM18 8h1v1h-1zM20 8h1v1h-1zM22 8h5v1h-5zM29 8h1v1h-1zM31 8h3v1h-3zM0 9h7v1h-7zM11 9h2v1h-2zM14 9h2v1h-2zM21 9h1v1h-1zM25 9h4v1h-4zM30 9h2v1h-2zM33 9h4v1h-4zM0 10h1v1h-1zM3 10h1v1h-1zM6 10h1v1h-1zM8 10h1v1h-1zM11 10h1v1h-1zM13 10h1v1h-1zM16 10h3v1h-3zM20 10h1v1h-1zM28 10h2v1h-2zM31 10h1v1h-1zM33 10h4v1h-4zM2 11h3v1h-3zM6 11h2v1h-2zM9 11h4v1h-4zM14 11h1v1h-1zM19 11h1v1h-1zM24 11h2v1h-2zM27 11h1v1h-1zM29 11h3v1h-3zM33 11h2v1h-2zM2 12h1v1h-1zM4 12h2v1h-2zM10 12h3v1h-3zM14 12h2v1h-2zM17 12h1v1h-1zM19 12h2v1h-2zM22 12h3v1h-3zM26 12h1v1h-1zM31 12h1v1h-1zM33 12h1v1h-1zM35 12h2v1h-2zM0 13h1v1h-1zM2 13h1v1h-1zM4 13h3v1h-3zM10 13h2v1h-2zM15 13h1v1h-1zM21 13h4v1h-4zM26 13h2v1h-2zM30 13h1v1h-1zM33 13h1v1h-1zM35 13h2v1h-2zM3 14h4v1h-4zM11 14h5v1h-5zM18 14h1v1h-1zM20 14h1v1h-1zM30 14h1v1h-1zM34 14h1v1h-1zM36 14h1v1h-1zM0 15h1v1h-1zM2 15h1v1h-1zM4 15h1v1h-1zM6 15h4v1h-4zM11 15h3v1h-3zM15 15h1v1h-1zM19 15h4v1h-4zM24 15h1v1h-1zM27 15h2v1h-2zM30 15h2v1h-2zM34 15h3v1h-3zM1 16h1v1h-1zM4 16h2v1h-2zM7 16h1v1h-1zM9 16h6v1h-6zM19 16h1v1h-1zM21 16h1v1h-1zM23 16h1v1h-1zM25 16h1v1h-1zM27 16h1v1h-1zM29 16h1v1h-1zM31 16h3v1h-3zM36 16h1v1h-1zM1 17h5v1h-5zM7 17h1v1h-1zM12 17h1v1h-1zM14 17h3v1h-3zM20 17h3v1h-3zM26 17h4v1h-4zM31 17h6v1h-6zM2 18h4v1h-4zM8 18h3v1h-3zM12 18h2v1h-2zM15 18h1v1h-1zM18 18h1v1h-1zM20 18h1v1h-1zM22 18h3v1h-3zM27 18h1v1h-1zM29 18h1v1h-1zM33 18h4v1h-4zM0 19h3v1h-3zM4 19h5v1h-5zM12 19h1v1h-1zM15 19h1v1h-1zM17 19h1v1h-1zM20 19h2v1h-2zM24 19h1v1h-1zM26 19h1v1h-1zM30 19h1v1h-1zM32 19h4v1h-4zM0 20h1v1h-1zM3 20h1v1h-1zM6 20h1v1h-1zM8 20h3v1h-3zM12 20h4v1h-4zM17 20h3v1h-3zM21 20h1v1h-1zM24 20h2v1h-2zM27 20h2v1h-2zM31 20h1v1h-1zM33 20h1v1h-1zM35 20h1v1h-1zM0 21h3v1h-3zM5 21h4v1h-4zM11 21h5v1h-5zM17 21h1v1h-1zM21 21h2v1h-2zM24 21h1v1h-1zM26 21h3v1h-3zM30 21h2v1h-2zM33 21h1v1h-1zM36 21h1v1h-1zM0 22h2v1h-2zM3 22h1v1h-1zM5 22h2v1h-2zM8 22h1v1h-1zM13 22h1v1h-1zM15 22h1v1h-1zM18 22h1v1h-1zM22 22h1v1h-1zM26 22h3v1h-3zM30 22h1v1h-1zM34 22h1v1h-1zM36 22h1v1h-1zM0 23h1v1h-1zM2 23h1v1h-1zM4 23h1v1h-1zM7 23h1v1h-1zM9 23h3v1h-3zM14 23h1v1h-1zM17 23h1v1h-1zM21 23h5v1h-5zM28 23h1v1h-1zM31 23h3v1h-3zM35 23h2v1h-2zM2 24h2v1h-2zM9 24h1v1h-1zM11 24h1v1h-1zM13 24h1v1h-1zM15 24h2v1h-2zM23 24h2v1h-2zM26 24h2v1h-2zM30 24h1v1h-1zM32 24h1v1h-1zM36 24h1v1h-1zM1 25h1v1h-1zM5 25h7v1h-7zM14 25h3v1h-3zM18 25h1v1h-1zM20 25h1v1h-1zM22 25h3v1h-3zM26 25h1v1h-1zM29 25h4v1h-4zM34 25h2v1h-2zM0 26h2v1h-2zM3 26h1v1h-1zM5 26h1v1h-1zM7 26h2v1h-2zM14 26h5v1h-5zM20 26h2v1h-2zM24 26h1v1h-1zM26 26h5v1h-5zM33 26h2v1h-2zM0 27h4v1h-4zM5 27h2v1h-2zM16 27h1v1h-1zM20 27h1v1h-1zM23 27h4v1h-4zM30 27h1v1h-1zM34 27h3v1h-3zM0 28h5v1h-5zM7 28h2v1h-2zM14 28h1v1h-1zM17 28h2v1h-2zM22 28h2v1h-2zM26 28h1v1h-1zM28 28h1v1h-1zM30 28h1v1h-1zM33 28h1v1h-1zM36 28h1v1h-1zM8 29h2v1h-2zM11 29h1v1h-1zM14 29h1v1h-1zM16 29h2v1h-2zM19 29h2v1h-2zM23 29h1v1h-1zM26 29h1v1h-1zM30 29h2v1h-2zM33 29h4v1h-4zM0 30h7v1h-7zM10 30h2v1h-2zM15 30h2v1h-2zM22 30h9v1h-9zM32 30h1v1h-1zM36 30h1v1h-1zM0 31h1v1h-1zM6 31h1v1h-1zM17 31h2v1h-2zM21 31h5v1h-5zM27 31h5v1h-5zM33 31h3v1h-3zM0 32h1v1h-1zM2 32h3v1h-3zM6 32h1v1h-1zM8 32h3v1h-3zM13 32h3v1h-3zM17 32h1v1h-1zM21 32h1v1h-1zM23 32h2v1h-2zM26 32h1v1h-1zM29 32h2v1h-2zM34 32h1v1h-1zM0 33h1v1h-1zM2 33h3v1h-3zM6 33h1v1h-1zM10 33h8v1h-8zM19 33h6v1h-6zM27 33h1v1h-1zM29 33h3v1h-3zM33 33h1v1h-1zM0 34h1v1h-1zM2 34h3v1h-3zM6 34h1v1h-1zM8 34h7v1h-7zM18 34h4v1h-4zM23 34h1v1h-1zM25 34h1v1h-1zM27 34h4v1h-4zM33 34h1v1h-1zM0 35h1v1h-1zM6 35h1v1h-1zM8 35h2v1h-2zM11 35h4v1h-4zM17 35h2v1h-2zM20 35h6v1h-6zM27 35h3v1h-3zM31 35h2v1h-2zM35 35h1v1h-1zM0 36h7v1h-7zM13 36h2v1h-2zM18 36h2v1h-2zM21 36h1v1h-1zM23 36h3v1h-3zM27 36h5v1h-5zM33 36h3v1h-3z"/><circle cx="18.5" cy="18.5" r="5" fill="#fff" shape-rendering="auto"/><circle cx="18.5" cy="18.5" r="3.5" fill="#d42a2a" shape-rendering="auto"/><circle cx="18.5" cy="18.7" r="1.8" fill="none" stroke="#fff" stroke-width=".7" shape-rendering="auto"/></svg>

<div class="a" style="left:1027px;top:587px;width:190px;height:79px;background:#fff;border:1px solid #eee"></div>
<svg class="a" style="left:1028px;top:588px" width="188" height="77" viewBox="0 0 188 77"><path d="M45.6 64.7C62 54 92 46 109 45.4C132 47 162 57 187 64.7V72H49C44 70 44 67 45.6 64.7Z" fill="#f9f9f9"/><g fill="#f4f4f4"><rect x="132" y="52" width="6" height="8"/><rect x="145" y="54" width="6" height="7"/><rect x="158" y="56" width="6" height="6"/><rect x="171" y="58" width="8" height="5"/></g></svg>
<svg class="a" style="left:1021px;top:620px" width="8" height="16"><path d="M7 1L1 8l6 7z" fill="#fff"/></svg>
<div class="a" style="left:1038px;top:600px;font-size:12px;line-height:18px;color:#000">官方APP下载，目前铁路未授权<br>其他网站或APP开展类似服务内<br>容，敬请广大用户注意。</div>

<div class="a" style="left:0;top:707px;width:1245px;height:80px;background:#666;border-top:1px solid #5b5b5b;border-bottom:1px solid #5b5b5b"></div>
<div class="a" style="left:354px;top:723px;font-size:14px;line-height:18px;color:#ddd">版权所有©2008-2025　中国铁道科学研究院集团有限公司 技术支持：铁旅科技有限公司</div>
<svg class="a" style="left:343px;top:754px" width="13" height="13" viewBox="0 0 13 13"><ellipse cx="6.3" cy="7" rx="5.6" ry="5.8" fill="#d8b040"/><circle cx="6.3" cy="5.6" r="3.9" fill="#1a1a60"/><circle cx="6.3" cy="5.5" r="3" fill="#d8301a"/><circle cx="6.3" cy="5.8" r="1" fill="#f0d060"/><path d="M1.5 11h9.6v1.6H1.5z" fill="#e8c050"/></svg>
<div class="a" style="left:360px;top:754px;font-size:14px;line-height:18px;color:#ddd">京公网安备 11010802038392号　|　京ICP备05020493号-4　|　ICP证：京B2-20202537</div>
<div class="a" style="left:1091px;top:724px;width:130px;height:46px;background:#fff"></div>
<svg class="a" style="left:1098px;top:724px" width="50" height="46" viewBox="0 0 50 46"><g fill="#333"><circle cx="16.1" cy="11.6" r="2.5"/><rect x="14.2" y="15.9" width="4.5" height="14.1" rx="1"/><rect x="18" y="20.6" width="8.6" height="1.9" rx=".9"/><rect x="14.2" y="27.2" width="13" height="2.8"/></g><g fill="none" stroke="#333" stroke-linecap="round"><path d="M26 28.8L30.3 35.4" stroke-width="2.6"/><path d="M11.6 23.2A9.6 9.6 0 1 0 25.2 34.2" stroke-width="2"/><path d="M24.8 9.4A15.6 15.6 0 0 1 42.2 9.4" stroke-width="1.8"/><path d="M27.7 12.3A11.6 11.6 0 0 1 39.3 12.3" stroke-width="1.8"/><path d="M30.3 15.3A7.7 7.7 0 0 1 36.7 15.3" stroke-width="1.8"/></g><circle cx="33.4" cy="19.3" r="1.7" fill="#333"/></svg>
<div class="a" style="left:1158px;top:732px;font-size:13px;line-height:16px;color:#333;font-weight:bold">适老化</div>
<div class="a" style="left:1144px;top:747px;font-size:13px;line-height:16px;color:#333;font-weight:bold;letter-spacing:0.8px">无障碍服务</div>
</body></html>
